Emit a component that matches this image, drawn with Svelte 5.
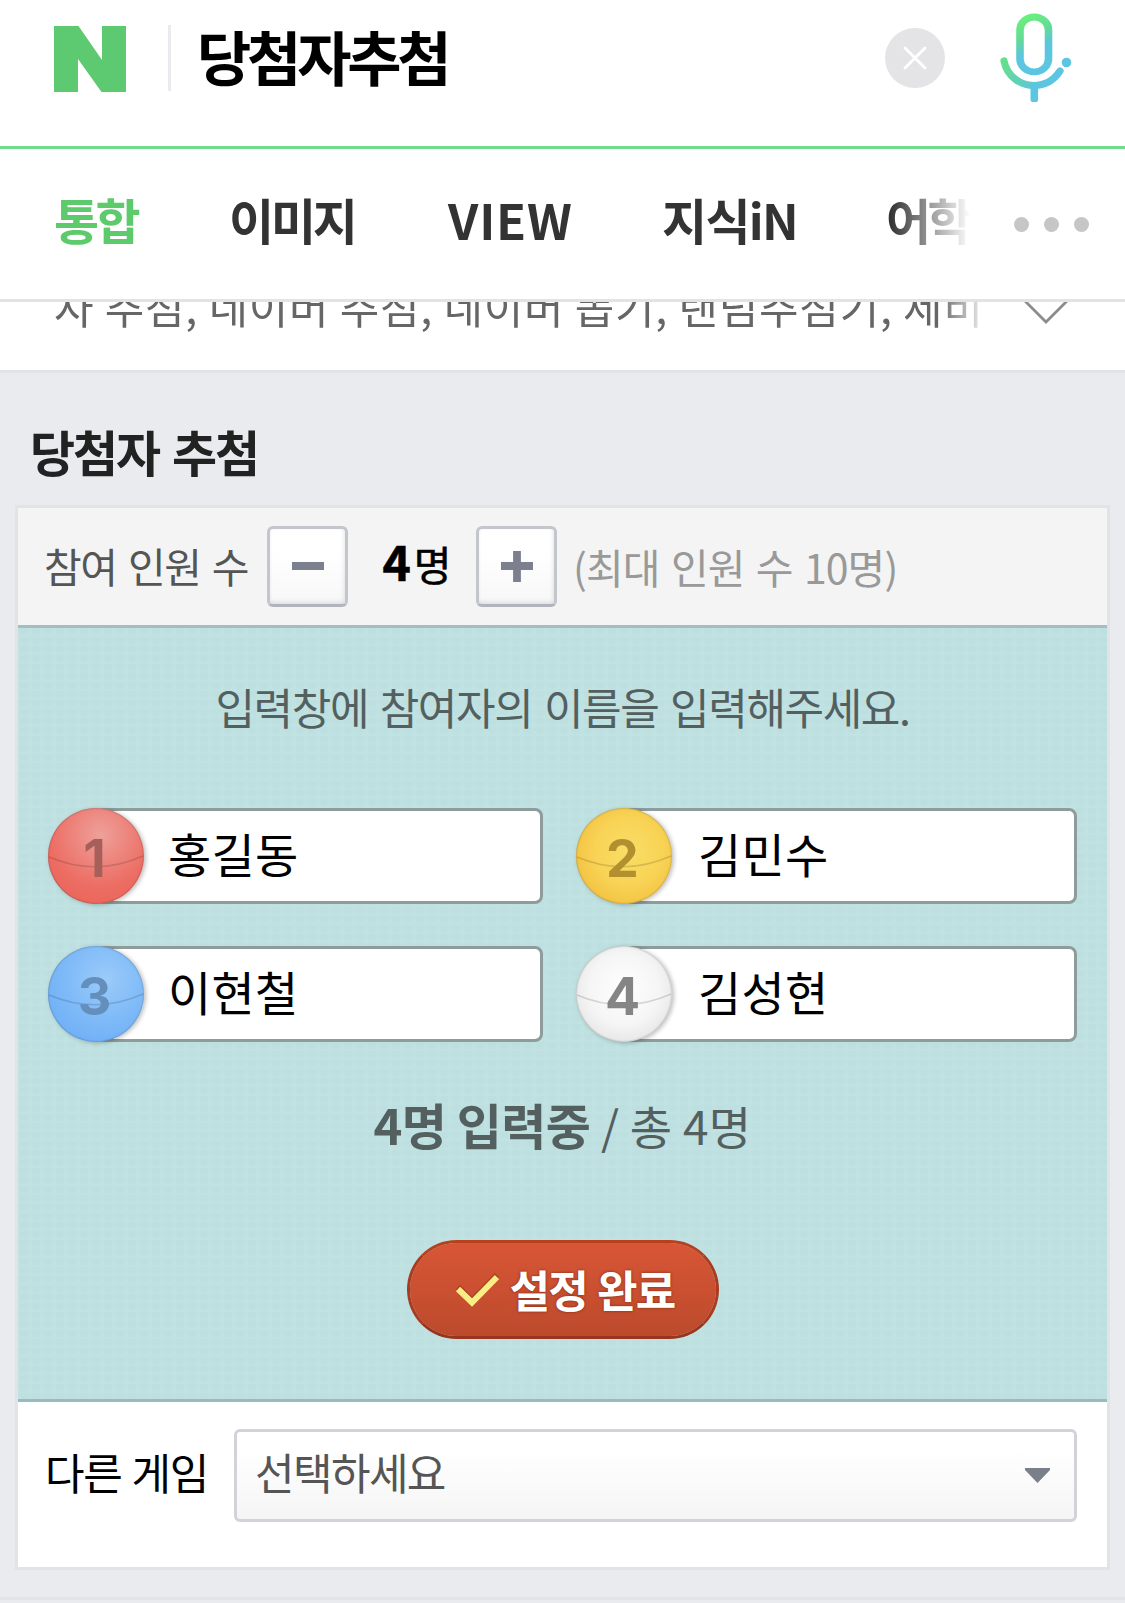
<script>
  const tabs = [
    { label: '통합', active: true, width: 175, spacing: -3.5 },
    { label: '이미지', width: 219, spacing: -3.2 },
    { label: 'VIEW', width: 214, spacing: 0.8 },
    { label: '지식iN', width: 224, spacing: -1.7 },
    { label: '어학', width: 90, spacing: -3.5 },
  ]

  const max = 10
  const colors = ['red', 'yellow', 'blue', 'white']
  let players = $state([
    { name: '홍길동', color: 'red' },
    { name: '김민수', color: 'yellow' },
    { name: '이현철', color: 'blue' },
    { name: '김성현', color: 'white' },
  ])
  let filled = $derived(players.filter((p) => p.name).length)

  function remove() {
    if (players.length > 2) players.pop()
  }

  function add() {
    if (players.length < max) players.push({ name: '', color: colors[players.length % 4] })
  }
</script>

<div class="page">
  <header>
    <svg class="logo" width="72" height="66" viewBox="0 0 72 66">
      <path d="M0 0H24.500L48 34V0H72V66H47.500L24 33V66H0Z" fill="#5dc970" />
    </svg>
    <span class="divider"></span>
    <span class="query">당첨자추첨</span>
    <button class="clear" aria-label="clear">
      <svg width="60" height="60" viewBox="0 0 60 60">
        <circle cx="30" cy="30" r="30" fill="#e4e4e6" />
        <path d="M20 20L40 40M40 20L20 40" stroke="#fff" stroke-width="2.800" stroke-linecap="round" />
      </svg>
    </button>
    <svg class="mic" width="76" height="92" viewBox="0 0 76 92">
      <defs>
        <linearGradient id="capsule" gradientUnits="userSpaceOnUse" x1="22" y1="6" x2="46" y2="54">
          <stop offset="0" stop-color="#6df278" />
          <stop offset="0.45" stop-color="#63d99a" />
          <stop offset="0.75" stop-color="#5cc5e0" />
        </linearGradient>
        <linearGradient id="cradle" gradientUnits="userSpaceOnUse" x1="4" y1="50" x2="46" y2="76">
          <stop offset="0" stop-color="#66e086" />
          <stop offset="0.9" stop-color="#5cc5e2" />
        </linearGradient>
      </defs>
      <g fill="none" stroke-linecap="round">
        <rect x="22" y="7" width="28.500" height="61" rx="14.250" stroke="url(#capsule)" stroke-width="7.600" transform="scale(1 0.9) translate(0 0.800)" />
        <path d="M6 51C9 66 22 75.500 36 75.500C47 75.500 56 70 62 61" stroke="url(#cradle)" stroke-width="7.200" />
        <path d="M36.300 77V89" stroke="#5cc5e2" stroke-width="7.600" />
      </g>
      <circle cx="68.500" cy="52.500" r="4.800" fill="#5cc5e2" />
    </svg>
  </header>

  <nav>
    <div class="tabs">
      {#each tabs as tab}
        <span class="tab" class:active={tab.active} style="width: {tab.width}px; letter-spacing: {tab.spacing}px">{tab.label}</span>
      {/each}
    </div>
    <div class="more"><i></i><i></i><i></i></div>
  </nav>

  <div class="related">
    <p>자 추첨, 네이버 추첨, 네이버 뽑기, 랜덤추첨기, 제비</p>
    <svg width="48" height="26" viewBox="0 0 48 26">
      <path d="M-1 -5L24 20L49 -5" fill="none" stroke="#8c8c8c" stroke-width="2.800" />
    </svg>
  </div>

  <main>
    <h2>당첨자 추첨</h2>
    <section class="card">
      <div class="counter">
        <span class="label">참여 인원 수</span>
        <button class="step" aria-label="minus" onclick={remove}>
          <svg width="32" height="32" viewBox="0 0 32 32"><path d="M0 15H32" stroke="#7c808e" stroke-width="8" /></svg>
        </button>
        <span class="count"><b>{players.length}</b>명</span>
        <button class="step" aria-label="plus" onclick={add}>
          <svg width="32" height="32" viewBox="0 0 32 32"><path d="M0 15H32M16 0V31" stroke="#7c808e" stroke-width="7.800" /></svg>
        </button>
        <span class="limit">(최대 인원 수 {max}명)</span>
      </div>

      <div class="board">
        <p class="guide">입력창에 참여자의 이름을 입력해주세요.</p>
        <div class="players">
          {#each players as player, i}
            <div class="player">
              <span class="ball {player.color}">
                <svg width="96" height="96" viewBox="0 0 96 96">
                  <path d="M1 49Q48 69 95 48" fill="none" stroke="#000" stroke-opacity="0.14" stroke-width="1.600" />
                </svg>
                <b>{i + 1}</b>
              </span>
              <span class="name">{player.name}</span>
            </div>
          {/each}
        </div>
        <p class="status"><b>{filled}명 입력중</b> <span>/ 총 {players.length}명</span></p>
        <button class="done">
          <svg width="44" height="36" viewBox="0 0 44 36">
            <path d="M3 16L17 30L42 4" fill="none" stroke="#8a2f18" stroke-opacity="0.5" stroke-width="6" />
            <path d="M3 18L17 31.500L42 6" fill="none" stroke="#f8ee84" stroke-width="6" />
          </svg>
          <span>설정 완료</span>
        </button>
      </div>

      <div class="games">
        <span class="label">다른 게임</span>
        <button class="select">
          <span>선택하세요</span>
          <svg width="25" height="15" viewBox="0 0 25 15"><path d="M0 0H25V2L12.500 15L0 2Z" fill="#7b7e8b" /></svg>
        </button>
      </div>
    </section>
  </main>
</div>

<style>
  :global(body) {
    background: #e9ebef;
  }
  .page {
    width: 1125px;
    height: 1603px;
    overflow: hidden;
    background: #e9ebef;
    font-family: 'Noto Sans CJK KR', 'Noto Sans', sans-serif;
    white-space: nowrap;
  }
  .page * {
    box-sizing: border-box;
  }
  button {
    padding: 0;
    border: none;
    background: none;
    font-family: inherit;
  }
  svg {
    display: block;
    flex: none;
  }
  p,
  h2 {
    margin: 0;
  }
  header {
    display: flex;
    align-items: flex-start;
    height: 149px;
    padding: 10px 51px 0 54px;
    background: #fff;
    border-bottom: 3px solid #6fdc8c;
  }
  .logo {
    margin-top: 16px;
  }
  .divider {
    width: 3px;
    height: 66px;
    margin: 15px 26px 0 42px;
    background: #e9ebf0;
  }
  .query {
    flex: 1;
    margin-top: 10px;
    font-size: 59px;
    line-height: 72px;
    font-weight: 700;
    letter-spacing: -4.2px;
    color: #000;
  }
  .clear {
    margin: 18px 53px 0 0;
  }
  nav {
    display: flex;
    height: 153px;
    background: #fff;
    border-bottom: 3px solid #e2e3e7;
  }
  .tabs {
    display: flex;
    width: 980px;
    padding-left: 54px;
    -webkit-mask-image: linear-gradient(90deg, #000 890px, transparent 970px);
    mask-image: linear-gradient(90deg, #000 890px, transparent 970px);
  }
  .tab {
    flex: none;
    padding-top: 35px;
    font-size: 49px;
    line-height: 70px;
    font-weight: 700;
    color: #333;
  }
  .tab.active {
    color: #5dcb6c;
  }
  .more {
    display: flex;
    gap: 15px;
    padding: 68px 0 0 34px;
  }
  .more i {
    width: 15px;
    height: 15px;
    border-radius: 50%;
    background: #c6c6c8;
  }
  .related {
    display: flex;
    justify-content: space-between;
    height: 71px;
    padding: 0 55px 0 54px;
    overflow: hidden;
    background: #fff;
    border-bottom: 3px solid #e1e3e7;
  }
  .related p {
    width: 940px;
    margin-top: -29px;
    font-size: 43px;
    line-height: 64px;
    letter-spacing: 0.75px;
    color: #666;
    -webkit-mask-image: linear-gradient(90deg, #000 885px, transparent 935px);
    mask-image: linear-gradient(90deg, #000 885px, transparent 935px);
  }
  h2 {
    height: 132px;
    padding: 43px 0 0 30px;
    font-size: 49px;
    line-height: 70px;
    font-weight: 700;
    letter-spacing: -2.1px;
    word-spacing: 4px;
    color: #222;
  }
  main {
    height: 1227px;
    border-bottom: 3px solid #e1e3e7;
  }
  .card {
    width: 1095px;
    height: 1065px;
    margin-left: 15px;
    background: #fff;
    border: 3px solid #e2e3e7;
  }
  .counter {
    display: flex;
    align-items: center;
    height: 117px;
    padding-left: 26px;
    background: #f4f4f4;
    font-size: 41px;
    line-height: 60px;
  }
  .counter .label {
    width: 223px;
    margin-top: -3px;
    letter-spacing: -1.4px;
    word-spacing: 3.5px;
    color: #555;
  }
  .step {
    display: flex;
    align-items: center;
    justify-content: center;
    width: 81px;
    height: 81px;
    border: 3px solid #c3c6cd;
    border-bottom-color: #b2b4bd;
    border-radius: 6px;
    background: linear-gradient(#fff 30%, #f7f7f8);
    box-shadow: inset -1px -2px 4px rgba(0, 0, 0, 0.1);
  }
  .count {
    display: flex;
    align-items: baseline;
    justify-content: center;
    width: 128px;
    gap: 3px;
    margin-top: -10px;
    padding-left: 10px;
    color: #000;
    -webkit-text-stroke: 0.6px #000;
  }
  .count b {
    font-size: 48px;
    font-weight: 700;
  }
  .limit {
    margin: -2px 0 0 16px;
    letter-spacing: -0.9px;
    word-spacing: 3px;
    color: #999;
  }
  .board {
    display: flex;
    flex-direction: column;
    align-items: center;
    height: 777px;
    border-top: 3px solid #a1bfc0;
    border-bottom: 3px solid #9abbbd;
    background-color: #c1e2e2;
    background-image: radial-gradient(ellipse at 50% 0, rgba(183, 218, 220, 0.4) 0 35%, transparent 70%);
    background-size: 12px 9px;
    color: #53605f;
  }
  .guide {
    margin-top: 46px;
    font-size: 43px;
    line-height: 64px;
    letter-spacing: -1.4px;
    word-spacing: 3.4px;
  }
  .players {
    display: grid;
    grid-template-columns: 495px 501px;
    gap: 42px 33px;
    margin-top: 70px;
  }
  .player {
    display: flex;
    height: 96px;
  }
  .ball {
    position: relative;
    z-index: 1;
    flex: none;
    width: 96px;
    height: 96px;
    border-radius: 50%;
    box-shadow:
      2px 1px 4px rgba(0, 0, 0, 0.25),
      inset 0 0 2px rgba(0, 0, 0, 0.4);
  }
  .ball svg {
    position: absolute;
    inset: 0;
  }
  .ball b {
    position: relative;
    display: block;
    padding-right: 3px;
    font-family: Inter, 'Liberation Sans', sans-serif;
    font-size: 52px;
    line-height: 101px;
    text-align: center;
  }
  .red {
    background: radial-gradient(circle at 55% 28%, #eea09a, #ec6d63 60%, #ea6155);
    color: #a65f59;
  }
  .yellow {
    background: radial-gradient(circle at 55% 45%, #f9de66, #f8d355 45%, #f4c444 72%);
    color: #b3902f;
  }
  .blue {
    background: radial-gradient(circle at 60% 35%, #9bcbf9, #80bbf8 45%, #72b1f7 75%);
    color: #648fbd;
  }
  .white {
    background: radial-gradient(circle at 50% 45%, #fff, #f5f5f5 50%, #e9e9e9 72%);
    color: #858585;
  }
  .name {
    flex: 1;
    margin-left: -48px;
    padding-left: 69px;
    border: 3px solid #8f9c9c;
    border-radius: 8px;
    background: #fff;
    font-size: 47px;
    line-height: 84px;
    letter-spacing: 0.3px;
    color: #000;
  }
  .player:nth-child(even) .name {
    padding-left: 71px;
  }
  .status {
    margin-top: 47px;
    font-size: 46px;
    line-height: 70px;
    letter-spacing: 0.3px;
  }
  .status b {
    font-size: 49px;
    font-weight: 700;
    letter-spacing: -0.6px;
  }
  .done {
    display: flex;
    align-items: center;
    width: 312px;
    height: 99px;
    margin-top: 80px;
    padding-left: 45px;
    border: 3px solid #a93b20;
    border-top-color: #b5411f;
    border-bottom-color: #99351d;
    border-radius: 50px;
    background: linear-gradient(#d85636, #bc4a2c) padding-box;
    color: #fff;
  }
  .done svg {
    margin-top: -2px;
  }
  .done span {
    margin: -2px 0 0 11px;
    font-size: 44px;
    line-height: 64px;
    font-weight: 700;
    letter-spacing: -1.8px;
    word-spacing: 2px;
    text-shadow: 0 0 3px #7c2814;
  }
  .games {
    display: flex;
    padding: 27px 30px 0 27px;
  }
  .games .label {
    width: 189px;
    padding-top: 10px;
    font-size: 43px;
    line-height: 64px;
    letter-spacing: -1.4px;
    word-spacing: 2px;
    color: #000;
  }
  .select {
    display: flex;
    flex: 1;
    align-items: center;
    justify-content: space-between;
    height: 93px;
    padding: 0 24px 0 18px;
    border: 3px solid #d1d3d9;
    border-radius: 6px;
    background: linear-gradient(#fff 20%, #f5f5f5);
    font-size: 43px;
    line-height: 64px;
    letter-spacing: -1.6px;
    color: #555;
  }
  .select span {
    margin-top: -10px;
  }
</style>
